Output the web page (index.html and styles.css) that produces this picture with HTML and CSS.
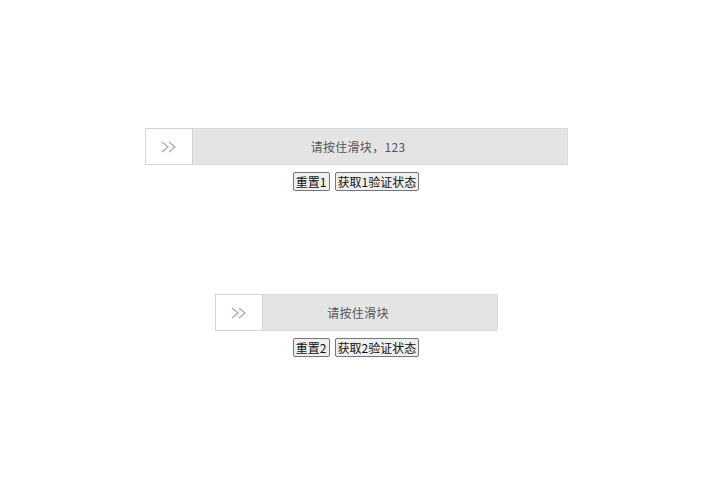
FILE: index.html
```html
<!DOCTYPE html>
<html lang="zh-CN">
<head>
    <meta charset="UTF-8">
    <meta name="viewport" content="width=device-width, initial-scale=1.0">
    <title>滑块验证</title>
    <link rel="stylesheet" href="styles.css">
</head>
<body>

    <div class="demo demo-first">
        <div class="slider slider-wide">
            <div class="slider-text">请按住滑块，123</div>
            <div class="slider-handle">
                <svg width="16" height="12" viewBox="0 0 16 12"><path d="M1 1l6 5-6 5M8 1l6 5-6 5" fill="none" stroke="#a8a8a8" stroke-width="1.2"/></svg>
            </div>
        </div>
        <div class="actions">
            <button class="btn">重置1</button>
            <button class="btn">获取1验证状态</button>
        </div>
    </div>

    <div class="demo demo-second">
        <div class="slider slider-narrow">
            <div class="slider-text">请按住滑块</div>
            <div class="slider-handle">
                <svg width="16" height="12" viewBox="0 0 16 12"><path d="M1 1l6 5-6 5M8 1l6 5-6 5" fill="none" stroke="#a8a8a8" stroke-width="1.2"/></svg>
            </div>
        </div>
        <div class="actions">
            <button class="btn">重置2</button>
            <button class="btn">获取2验证状态</button>
        </div>
    </div>

</body>
</html>
```

FILE: styles.css
```css
* {
    box-sizing: border-box;
}

body {
    margin: 8px;
    background: #fff;
    font-family: "Noto Sans CJK SC", "Microsoft YaHei", sans-serif;
}

.demo {
    padding-left: 2px;
}

.demo-first {
    margin-top: 120px;
}

.demo-second {
    margin-top: 103px;
}

.slider {
    position: relative;
    height: 37px;
    margin: 0 auto;
    background: #e4e4e4;
    border: 1px solid #dcdcdc;
}

.slider-wide {
    width: 423px;
}

.slider-narrow {
    width: 283px;
}

.slider-text {
    height: 100%;
    display: flex;
    justify-content: center;
    align-items: center;
    padding-left: 4px;
    font-size: 12px;
    letter-spacing: 0.3px;
    color: #555;
}

/* handle sits on top of the track */
.slider-handle {
    position: absolute;
    top: -1px;
    left: -1px;
    width: 48px;
    height: 37px;
    display: flex;
    justify-content: center;
    align-items: center;
    background: #fff;
    border: 1px solid #d4d4d4;
    cursor: pointer;
}

.actions {
    display: flex;
    justify-content: center;
    gap: 5px;
    margin-top: 7px;
}

.btn {
    padding: 1px 2px;
    font-family: "Noto Sans CJK SC", "Microsoft YaHei", sans-serif;
    font-size: 12px;
    line-height: 15px;
    color: #111;
    background: #efefef;
    border: 1px solid #767676;
    border-radius: 2px;
    cursor: pointer;
}
```
